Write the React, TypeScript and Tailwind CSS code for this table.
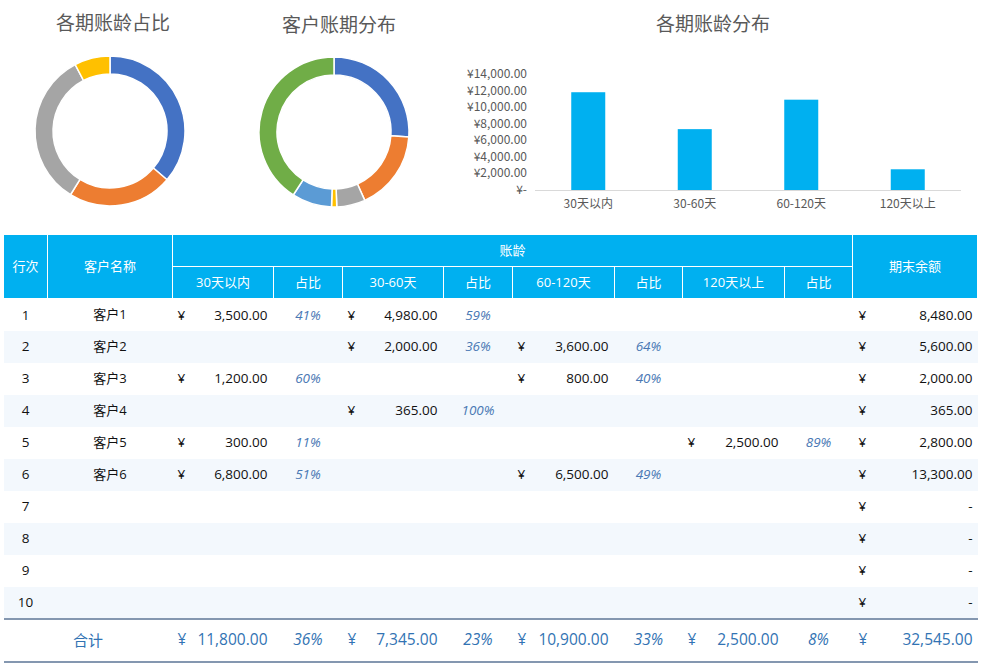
import React from "react";

const FONT = '"Noto Sans CJK SC", "Noto Sans", sans-serif';
const TFONT = '"Open Sans", "Noto Sans CJK SC", sans-serif';

type Seg = { v: number; c: string };

function arcPath(cx: number, cy: number, r1: number, r2: number, a0: number, a1: number) {
  const p = (r: number, a: number) => [cx + r * Math.sin(a), cy - r * Math.cos(a)];
  const large = a1 - a0 > Math.PI ? 1 : 0;
  const [x0, y0] = p(r2, a0);
  const [x1, y1] = p(r2, a1);
  const [x2, y2] = p(r1, a1);
  const [x3, y3] = p(r1, a0);
  return `M${x0} ${y0} A${r2} ${r2} 0 ${large} 1 ${x1} ${y1} L${x2} ${y2} A${r1} ${r1} 0 ${large} 0 ${x3} ${y3} Z`;
}

function Donut({ segs }: { segs: Seg[] }) {
  const total = segs.reduce((s, x) => s + x.v, 0);
  let acc = 0;
  return (
    <svg width={156} height={156} viewBox="0 0 156 156">
      {segs.map((s, i) => {
        const a0 = (acc / total) * Math.PI * 2;
        acc += s.v;
        const a1 = (acc / total) * Math.PI * 2;
        return (
          <path
            key={i}
            d={arcPath(78, 78, 57, 75, a0, a1)}
            fill={s.c}
            stroke="#ffffff"
            strokeWidth={1.5}
          />
        );
      })}
    </svg>
  );
}

const BLUE = "#4472c4";
const ORANGE = "#ed7d31";
const GRAY = "#a5a5a5";
const YELLOW = "#ffc000";
const LBLUE = "#5b9bd5";
const GREEN = "#70ad47";

function BarChart() {
  const ticks = [14000, 12000, 10000, 8000, 6000, 4000, 2000, 0];
  const y0 = 130;
  const scale = 116 / 14000;
  const bars = [
    { l: "30天以内", v: 11800 },
    { l: "30-60天", v: 7345 },
    { l: "60-120天", v: 10900 },
    { l: "120天以上", v: 2500 },
  ];
  const fmt = (n: number) =>
    n === 0 ? "¥-" : "¥" + n.toLocaleString("en-US", { minimumFractionDigits: 2 });
  return (
    <svg width={530} height={160} viewBox="0 0 530 160" style={{ fontFamily: FONT }}>
      {ticks.map((t) => (
        <text
          key={t}
          x={75}
          y={y0 - t * scale + 4}
          textAnchor="end"
          fontSize={12}
          fill="#595959"
        >
          {fmt(t)}
        </text>
      ))}
      {bars.map((b, i) => {
        const cx = 136.25 + i * 106.5;
        const h = b.v * scale;
        return (
          <g key={b.l}>
            <rect x={cx - 17} y={y0 - h} width={34} height={h} fill="#00b0f0" />
            <text x={cx} y={148} textAnchor="middle" fontSize={12} fill="#595959">
              {b.l}
            </text>
          </g>
        );
      })}
      <line x1={83} x2={509} y1={y0 + 0.5} y2={y0 + 0.5} stroke="#d9d9d9" strokeWidth={1} />
    </svg>
  );
}

type Row = {
  n: number;
  name?: string;
  a?: [string, string];
  b?: [string, string];
  c?: [string, string];
  d?: [string, string];
  bal: string;
};

const rows: Row[] = [
  { n: 1, name: "客户1", a: ["3,500.00", "41%"], b: ["4,980.00", "59%"], bal: "8,480.00" },
  { n: 2, name: "客户2", b: ["2,000.00", "36%"], c: ["3,600.00", "64%"], bal: "5,600.00" },
  { n: 3, name: "客户3", a: ["1,200.00", "60%"], c: ["800.00", "40%"], bal: "2,000.00" },
  { n: 4, name: "客户4", b: ["365.00", "100%"], bal: "365.00" },
  { n: 5, name: "客户5", a: ["300.00", "11%"], d: ["2,500.00", "89%"], bal: "2,800.00" },
  { n: 6, name: "客户6", a: ["6,800.00", "51%"], c: ["6,500.00", "49%"], bal: "13,300.00" },
  { n: 7, bal: "-" },
  { n: 8, bal: "-" },
  { n: 9, bal: "-" },
  { n: 10, bal: "-" },
];

function Money({ v }: { v?: string }) {
  if (!v) return <td />;
  return (
    <td className="pl-[5px] pr-[6px]">
      <div className="flex justify-between">
        <span>¥</span>
        <span>{v}</span>
      </div>
    </td>
  );
}

function Pct({ v }: { v?: string }) {
  return <td className="text-center italic text-[#4a78b4]">{v ?? ""}</td>;
}

export default function App() {
  const th = "border border-white font-normal text-center";
  return (
    <div className="w-[982px] h-[666px] bg-white overflow-hidden" style={{ fontFamily: FONT }}>
      <div className="flex h-[234px]">
        <div className="w-[226px] flex flex-col items-center pt-[8px]">
          <div className="text-[19px] leading-[28px] text-[#595959]">各期账龄占比</div>
          <div className="mt-[17px] mr-[6px]">
            <Donut
              segs={[
                { v: 11800, c: BLUE },
                { v: 7345, c: ORANGE },
                { v: 10900, c: GRAY },
                { v: 2500, c: YELLOW },
              ]}
            />
          </div>
        </div>
        <div className="w-[226px] flex flex-col items-center pt-[10px]">
          <div className="text-[19px] leading-[28px] text-[#595959]">客户账期分布</div>
          <div className="mt-[16px] mr-[11px]">
            <Donut
              segs={[
                { v: 8480, c: BLUE },
                { v: 5600, c: ORANGE },
                { v: 2000, c: GRAY },
                { v: 365, c: YELLOW },
                { v: 2800, c: LBLUE },
                { v: 13300, c: GREEN },
              ]}
            />
          </div>
        </div>
        <div className="w-[530px] flex flex-col items-center pt-[9px]">
          <div className="text-[19px] leading-[28px] text-[#595959] mr-[8px]">各期账龄分布</div>
          <div className="mt-[23px]">
            <BarChart />
          </div>
        </div>
      </div>

      <table
        className="ml-[3px] w-[974px] table-fixed border-collapse text-[13.5px] text-[#111]"
        style={{ fontFamily: TFONT }}
      >
        <colgroup>
          <col className="w-[44px]" />
          <col className="w-[125px]" />
          <col className="w-[101px]" />
          <col className="w-[69px]" />
          <col className="w-[101px]" />
          <col className="w-[69px]" />
          <col className="w-[102px]" />
          <col className="w-[68px]" />
          <col className="w-[102px]" />
          <col className="w-[68px]" />
          <col className="w-[125px]" />
        </colgroup>
        <thead className="bg-[#00b0f0] text-white text-[13px]">
          <tr className="h-[32px]">
            <th rowSpan={2} className={th}>行次</th>
            <th rowSpan={2} className={th}>客户名称</th>
            <th colSpan={8} className={th}>账龄</th>
            <th rowSpan={2} className={th}>期末余额</th>
          </tr>
          <tr className="h-[32px]">
            <th className={th}>30天以内</th>
            <th className={th}>占比</th>
            <th className={th}>30-60天</th>
            <th className={th}>占比</th>
            <th className={th}>60-120天</th>
            <th className={th}>占比</th>
            <th className={th}>120天以上</th>
            <th className={th}>占比</th>
          </tr>
        </thead>
        <tbody>
          {rows.map((r) => (
            <tr key={r.n} className={"h-[32px] " + (r.n % 2 === 0 ? "bg-[#f3f8fd]" : "bg-white")}>
              <td className="text-center">{r.n}</td>
              <td className="text-center text-[13px]">{r.name ?? ""}</td>
              <Money v={r.a?.[0]} />
              <Pct v={r.a?.[1]} />
              <Money v={r.b?.[0]} />
              <Pct v={r.b?.[1]} />
              <Money v={r.c?.[0]} />
              <Pct v={r.c?.[1]} />
              <Money v={r.d?.[0]} />
              <Pct v={r.d?.[1]} />
              <td className="pl-[6px] pr-[5px]">
                <div className="flex justify-between">
                  <span>¥</span>
                  <span>{r.bal}</span>
                </div>
              </td>
            </tr>
          ))}
        </tbody>
        <tfoot className="text-[15.5px] text-[#3273b3]">
          <tr className="h-[43px] border-t-2 border-b-2 border-[#8497b0]">
            <td colSpan={2} className="text-center text-[15px]">合计</td>
            <td className="pl-[5px] pr-[6px]">
              <div className="flex justify-between"><span>¥</span><span>11,800.00</span></div>
            </td>
            <td className="text-center italic">36%</td>
            <td className="pl-[5px] pr-[6px]">
              <div className="flex justify-between"><span>¥</span><span>7,345.00</span></div>
            </td>
            <td className="text-center italic">23%</td>
            <td className="pl-[5px] pr-[6px]">
              <div className="flex justify-between"><span>¥</span><span>10,900.00</span></div>
            </td>
            <td className="text-center italic">33%</td>
            <td className="pl-[5px] pr-[6px]">
              <div className="flex justify-between"><span>¥</span><span>2,500.00</span></div>
            </td>
            <td className="text-center italic">8%</td>
            <td className="pl-[6px] pr-[5px]">
              <div className="flex justify-between"><span>¥</span><span>32,545.00</span></div>
            </td>
          </tr>
        </tfoot>
      </table>
    </div>
  );
}
